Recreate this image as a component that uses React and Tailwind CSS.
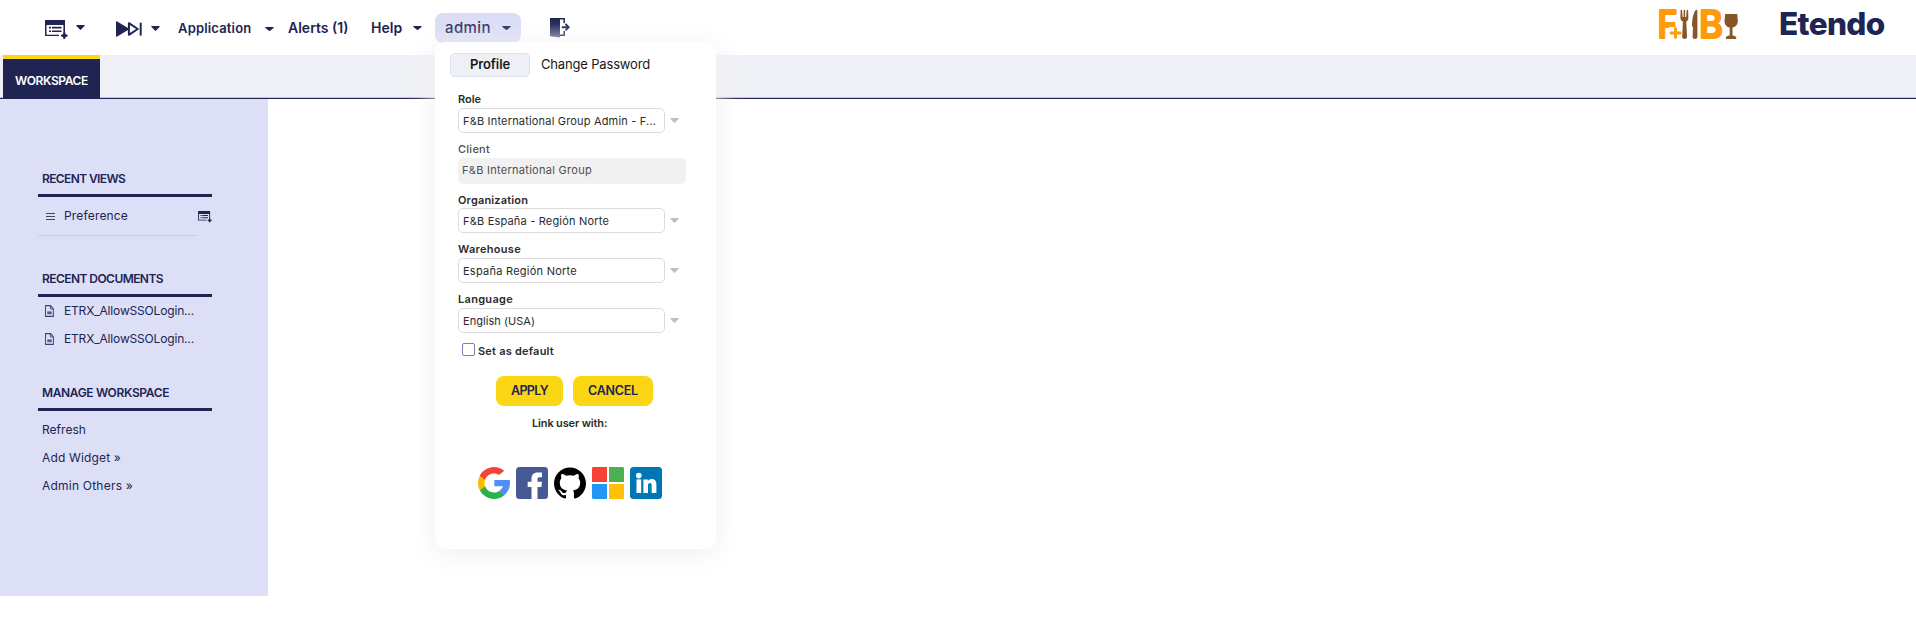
import React from 'react';
import { SiGithub } from 'react-icons/si';

function Caret({ className = '' }) {
  return (
    <svg viewBox="0 0 9 5" preserveAspectRatio="none" className={`w-[9px] shrink-0 ${className}`} fill="currentColor">
      <path d="M.3.4C.5 0 .8 0 1.2 0h6.6c.4 0 .7 0 .9.4.1.3 0 .5-.2.7L5.1 4.6c-.4.4-.8.4-1.2 0L.5 1.1C.3.9.2.7.3.4z" />
    </svg>
  );
}

function WindowPlusIcon({ className = '' }) {
  return (
    <svg viewBox="0 0 23 20" className={`shrink-0 ${className}`} fill="currentColor">
      <path fillRule="evenodd" d="M0 0h20v13h-1.6V5H1.5v9.7H14V16H0z" />
      <path d="M4 6.8h2v1.6H4zM7 6.8h9.5v1.6H7zM4 10.4h2V12H4zM7 10.4h9.5V12H7z" />
      <path d="M18.600 12.200h1.400l.7 2 2 .7v1.400l-2 .7-.7 2h-1.400l-.7-2-2-.7v-1.400l2-.7z" />
    </svg>
  );
}

function FastForwardIcon() {
  return (
    <svg viewBox="0 0 26 16" className="h-4 w-[26px] shrink-0" fill="currentColor">
      <path d="M0 1.2C0 .4.6.1 1.2.5L12 7v2L1.2 15.500C.6 15.900 0 15.600 0 14.800z" />
      <path d="M12.900 2.200 21.800 8l-8.900 5.800z" fill="none" stroke="currentColor" strokeWidth="2" strokeLinejoin="round" />
      <path d="M23.700 1.700h2v12.900h-2z" />
    </svg>
  );
}

function ExitIcon({ className = '' }) {
  return (
    <svg viewBox="0 0 20 20" className={`h-5 w-5 shrink-0 ${className}`}>
      <defs>
        <linearGradient id="door" x1="0" y1="0" x2="0" y2="1">
          <stop offset="0.3" stopColor="#1c2050" />
          <stop offset="1" stopColor="#595b8b" />
        </linearGradient>
      </defs>
      <path d="M0 0h10v19.500L0 18.300z" fill="url(#door)" />
      <path d="M10 .8h4.200v4.400M14.200 13v4.200H10" fill="none" stroke="#202452" strokeWidth="1.500" />
      <path d="M11.800 9.200h6M15.500 6l3.200 3.200-3.200 3.200" fill="none" stroke="#202452" strokeWidth="1.900" />
    </svg>
  );
}

function FoodLogo({ className = '' }) {
  return (
    <svg viewBox="0 0 79 30" className={`h-[30px] w-[79px] shrink-0 overflow-visible ${className}`}>
      <g fill="#ff9a0d" stroke="#ff9a0d" strokeWidth="1.800" strokeLinejoin="round" fontFamily="Inter, sans-serif" fontWeight="600" fontSize="38">
        <text x="-1.500" y="28.800" textLength="20" lengthAdjust="spacingAndGlyphs">F</text>
        <text x="40" y="28.800" textLength="24" lengthAdjust="spacingAndGlyphs">B</text>
      </g>
      <path d="M10 18h13v12h-13z" fill="#fff" />
      <path d="M16.500 19.500v9M12 24h9.300" stroke="#ff9a0d" strokeWidth="2.800" strokeLinecap="round" />
      <g fill="#865528">
        <path d="M21.600 1.500c0-1 1.400-1 1.500 0l.5 6.500h1V1.500c0-1 1.500-1 1.500 0V8h1l.5-6.500c.1-1 1.500-1 1.500 0l.3 7.500c0 2-.9 3-2.100 3.500l.7 15.500c0 2.600-4.800 2.600-4.800 0l.7-15.500C22.700 12 21.400 11 21.400 9z" />
        <path d="M38.400 2.200c0-1.700-1.400-1.900-2.300-.4-1.800 3.100-3.100 8.600-3.100 15.200l1 1.500-.4 9.500c0 2.600 4.600 2.600 4.800 0z" />
        <path d="M66.200 5h12l.6 6.500c.2 4-2 6.300-5.300 7v7.800l3.700 1.500V30H67v-2.200l3.700-1.500v-7.800c-3.300-.7-5.400-3-5.200-7z" />
      </g>
    </svg>
  );
}

function DocIcon() {
  return (
    <svg viewBox="0 0 10 12" className="mr-px h-3 w-[9px] shrink-0" preserveAspectRatio="none" fill="none" stroke="#3f4170">
      <path d="M.6.600h5.600L9.300 3.800v7.600H.6z" strokeWidth="1.100" />
      <path d="M6 .6V4h3.300" strokeWidth=".9" />
      <path d="M2.500 6.400h5v2.800h-5z" fill="#5a5c88" stroke="none" />
    </svg>
  );
}

function GoogleIcon() {
  return (
    <svg viewBox="0 0 512 512" className="size-8">
      <path fill="#FBBB00" d="M113.470,309.408L95.648,375.940l-65.139,1.378C11.042,341.211,0,299.900,0,256c0-42.451,10.324-82.483,28.624-117.732h0.014l57.992,10.632l25.404,57.644c-5.317,15.501-8.215,32.141-8.215,49.456C103.821,274.792,107.225,292.797,113.470,309.408z" />
      <path fill="#518EF8" d="M507.527,208.176C510.467,223.662,512,239.655,512,256c0,18.328-1.927,36.206-5.598,53.451c-12.462,58.683-45.025,109.925-90.134,146.187l-0.014-0.014l-73.044-3.727l-10.338-64.535c29.932-17.554,53.324-45.025,65.646-77.911h-136.890V208.176h138.887L507.527,208.176z" />
      <path fill="#28B446" d="M416.253,455.624l0.014,0.014C372.396,490.901,316.666,512,256,512c-97.491,0-182.252-54.491-225.491-134.681l82.961-67.910c21.619,57.698,77.278,98.771,142.530,98.771c28.047,0,54.323-7.582,76.870-20.818L416.253,455.624z" />
      <path fill="#F44336" d="M419.404,58.936l-82.933,67.896c-23.335-14.586-50.919-23.012-80.471-23.012c-66.729,0-123.429,42.957-143.965,102.724l-83.397-68.276h-0.014C71.230,56.123,157.060,0,256,0C318.115,0,375.068,22.126,419.404,58.936z" />
    </svg>
  );
}

function FacebookIcon() {
  return (
    <svg viewBox="0 0 32 32" className="size-8">
      <rect width="32" height="32" rx="3.500" fill="#475993" />
      <path fill="#fff" d="M15.500 32V20h-3.800v-5.300h3.800v-3.200c0-3.800 2.300-6 6-6H26v4.800h-2.600c-1.600 0-1.900.8-1.900 1.900v2.500H26l-.6 5.300h-3.900v12z" />
    </svg>
  );
}

function MicrosoftIcon() {
  return (
    <svg viewBox="0 0 32 32" className="size-8">
      <path fill="#F44336" d="M1 0h14v15H0V1z" />
      <path fill="#4CAF50" d="M17 0h14l1 1v14H17z" />
      <path fill="#2196F3" d="M0 17h15v15H1l-1-1z" />
      <path fill="#FFC107" d="M17 17h15v14l-1 1H17z" />
    </svg>
  );
}

function LinkedinIcon() {
  return (
    <svg viewBox="0 0 32 32" className="size-8">
      <rect width="32" height="32" rx="3.500" fill="#0077B5" />
      <circle cx="8.800" cy="8.600" r="2.800" fill="#fff" />
      <rect x="6.500" y="12.400" width="4.700" height="13.600" fill="#fff" />
      <path fill="#fff" d="M13.400 12.400h4.400v1.900c.8-1.400 2.300-2.200 4-2.200 3.400 0 4.600 2.300 4.600 5.800V26h-4.700v-7.100c0-1.900-.4-3-1.800-3-1.300 0-1.900 1-1.900 2.800V26h-4.600z" />
    </svg>
  );
}

function Header() {
  return (
    <header className="flex h-[55px] items-start">
      <WindowPlusIcon className="mt-5 ml-[45px] h-5 w-[23px]" />
      <Caret className="mt-[25px] ml-[8px] h-[5px]" />
      <div className="mt-[21px] ml-[31px]"><FastForwardIcon /></div>
      <Caret className="mt-[26px] ml-[9px] h-[5px]" />
      <span className="mt-[18px] ml-[18px] w-[87px] text-[13px] leading-5 font-semibold tracking-[0.170px]">Application</span>
      <Caret className="mt-[27px] h-[4px]" />
      <span className="mt-[18px] ml-[14px] w-[83px] text-[14px] leading-5 font-semibold">Alerts (1)</span>
      <span className="mt-[18px] w-[42px] text-[14px] leading-5 font-semibold">Help</span>
      <Caret className="mt-[26px] h-[4px]" />
      <div className="mt-[13px] ml-[13px] flex h-[30px] w-[86px] items-center rounded-lg bg-[#dbddf6] pl-[10px] text-[#25295a]">
        <span className="w-[57px] text-[15px] font-medium tracking-[0.400px]">admin</span>
        <Caret className="h-[4px]" />
      </div>
      <ExitIcon className="mt-[18px] ml-[29px]" />
      <FoodLogo className="mt-[9px] ml-auto" />
      <span className="mt-[4px] ml-[41px] w-[137px] text-[31.500px] leading-[40px] font-extrabold tracking-[-0.650px]">Etendo</span>
    </header>
  );
}

function TabBar() {
  return (
    <div className="flex h-[44px] border-b border-[#202452] bg-[#eff0f5] pl-[3px] shadow-[inset_0_-1px_0_#c3c4ce]">
      <div className="flex h-[43px] w-[97px] items-center border-t-4 border-[#fad614] bg-[#202452] pt-[4px] pl-[12px] text-[12px] font-semibold tracking-[-0.380px] text-white">WORKSPACE</div>
    </div>
  );
}

function SectionTitle({ children, className = '' }) {
  return <h2 className={`flex h-[34px] w-[174px] items-center border-b-3 border-[#202452] pl-1 text-[12px] font-semibold ${className}`}>{children}</h2>;
}

function Sidebar() {
  return (
    <aside className="h-[497px] w-[268px] bg-[#dddff6] pt-[64px] pl-[38px] text-[12px]">
      <SectionTitle className="tracking-[-0.620px]">RECENT VIEWS</SectionTitle>
      <div className="flex h-[38px] w-[174px] items-center pl-[8px]">
        <svg viewBox="0 0 9 7" className="h-[7px] w-[9px]" fill="#3f4170"><path d="M0 0h9v1H0zM0 3h9v1H0zM0 6h9v1H0z" /></svg>
        <span className="ml-[9px] tracking-[0.170px]">Preference</span>
        <WindowPlusIcon className="mt-px ml-auto h-3 w-[14px]" />
      </div>
      <div className="h-px w-[159px] bg-[#c8cbf0]" />
      <SectionTitle className="mt-[27px] tracking-[-0.560px]">RECENT DOCUMENTS</SectionTitle>
      {[1, 2].map((n) => (
        <div key={n} className="flex h-7 items-center gap-[9px] pl-[7px]">
          <DocIcon />
          <span className="tracking-[-0.170px]">ETRX_AllowSSOLogin...</span>
        </div>
      ))}
      <SectionTitle className="mt-[24px] tracking-[-0.360px]">MANAGE WORKSPACE</SectionTitle>
      <div className="mt-[5px] pl-1 leading-7">
        <div className="tracking-[0.040px]">Refresh</div>
        <div className="tracking-[0.160px]">Add Widget »</div>
        <div className="tracking-[0.220px]">Admin Others »</div>
      </div>
    </aside>
  );
}

function SelectField({ label, labelClass, value, valueClass }) {
  return (
    <div className="h-[50px]">
      <div className={`h-[18px] text-[11px] leading-[19px] font-semibold ${labelClass}`}>{label}</div>
      <div className="flex items-center">
        <div className={`h-[25px] w-[207px] rounded-[5px] border border-[#dcdcdc] pl-1 text-[11px] leading-[24px] whitespace-nowrap ${valueClass}`}>{value}</div>
        <Caret className="mt-[-1px] ml-[5px] h-[5px] text-[#bfbfbf]" />
      </div>
    </div>
  );
}

function ProfilePanel() {
  return (
    <section className="absolute top-[42px] left-[435px] h-[507px] w-[281px] rounded-[10px] bg-white pt-[11px] text-[#2b2b2b] shadow-[0_4px_28px_2px_#f1f1f1]">
      <div className="flex items-center pl-[15px] text-[13px] text-[#181818]">
        <div className="flex h-6 w-20 items-center justify-center rounded-[5px] border border-[#dcdff6] bg-[#eff0f6] font-semibold tracking-[-0.110px]">Profile</div>
        <div className="ml-[11px] tracking-[-0.170px]">Change Password</div>
      </div>
      <div className="mt-[13px] pl-[23px]">
        <SelectField label="Role" labelClass="" value="F&B International Group Admin - F..." valueClass="tracking-[0.180px]" />
        <div className="h-[50px] text-[11px] text-[#4f4f4f]">
          <div className="h-[18px] leading-[19px] font-medium tracking-[0.260px]">Client</div>
          <div className="h-[26px] w-[228px] rounded-[5px] bg-[#f1f1f1] pl-1 leading-[25px] tracking-[0.280px]">F&amp;B International Group</div>
        </div>
        <SelectField label="Organization" labelClass="pt-px tracking-[0.160px]" value="F&B España - Región Norte" valueClass="tracking-[0.190px]" />
        <SelectField label="Warehouse" labelClass="tracking-[0.300px]" value="España Región Norte" valueClass="tracking-[0.250px]" />
        <SelectField label="Language" labelClass="tracking-[0.300px]" value="English (USA)" valueClass="tracking-[0.040px]" />
        <div className="flex h-[22px] items-center pl-1">
          <div className="mt-[-3px] size-[13px] rounded-[2px] border border-[#7b7db5]" />
          <span className="ml-[3px] text-[11px] font-semibold tracking-[0.220px]">Set as default</span>
        </div>
      </div>
      <div className="mt-[14px] flex gap-[10px] pl-[61px] text-[12.500px] font-semibold text-[#202452]">
        <button className="h-[30px] w-[67px] rounded-lg bg-[#fad614] tracking-[-0.650px]">APPLY</button>
        <button className="h-[30px] w-[80px] rounded-lg bg-[#fad614] tracking-[-0.250px]">CANCEL</button>
      </div>
      <div className="mt-[7px] pl-[97px] text-[11px] leading-5 font-semibold tracking-[-0.150px]">Link user with:</div>
      <div className="mt-[34px] flex gap-[6px] pl-[43px]">
        <GoogleIcon />
        <FacebookIcon />
        <SiGithub className="size-8 text-black" />
        <MicrosoftIcon />
        <LinkedinIcon />
      </div>
    </section>
  );
}

export default function App() {
  return (
    <div className="relative h-[627px] w-[1916px] overflow-hidden bg-white font-[Inter,sans-serif] text-[#202452]">
      <Header />
      <TabBar />
      <Sidebar />
      <ProfilePanel />
    </div>
  );
}
